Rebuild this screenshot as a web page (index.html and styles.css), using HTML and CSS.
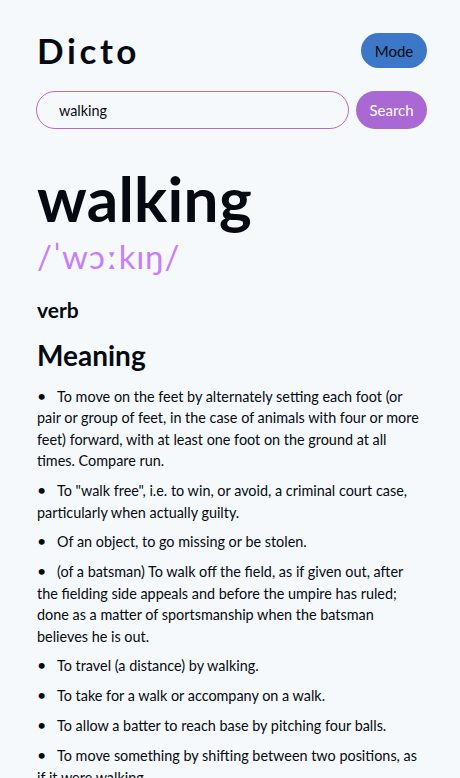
FILE: index.html
```html
<!DOCTYPE html>
<html lang="en">
<head>
<meta charset="utf-8">
<title>Dicto</title>
<link rel="stylesheet" href="styles.css">
</head>
<body>
<div class="app">
  <header class="topbar">
    <h1 class="logo">Dicto</h1>
    <button class="mode-btn">Mode</button>
  </header>
  <form class="search">
    <input class="search-input" type="text" value="walking">
    <button class="search-btn" type="button">Search</button>
  </form>
  <main class="entry">
    <h2 class="word">walking</h2>
    <p class="phonetic">/ˈwɔːkɪŋ/</p>
    <h3 class="pos">verb</h3>
    <h3 class="meaning-title">Meaning</h3>
    <ul class="defs">
      <li>To move on the feet by alternately setting each foot (or pair or group of feet, in the case of animals with four or more feet) forward, with at least one foot on the ground at all times. Compare run.</li>
      <li>To "walk free", i.e. to win, or avoid, a criminal court case, particularly when actually guilty.</li>
      <li>Of an object, to go missing or be stolen.</li>
      <li>(of a batsman) To walk off the field, as if given out, after the fielding side appeals and before the umpire has ruled; done as a matter of sportsmanship when the batsman believes he is out.</li>
      <li>To travel (a distance) by walking.</li>
      <li>To take for a walk or accompany on a walk.</li>
      <li>To allow a batter to reach base by pitching four balls.</li>
      <li>To move something by shifting between two positions, as if it were walking.</li>
    </ul>
  </main>
</div>
</body>
</html>
```
FILE: styles.css
```css
* { box-sizing: border-box; }
html, body { margin: 0; padding: 0; }
body {
  background: #f5f9fc;
  color: #050a10;
  font-family: Lato, "Noto Sans", sans-serif;
  overflow: hidden;
}
.app {
  padding: 33px 33px 0 37px;
}
.topbar {
  display: flex;
  justify-content: space-between;
  align-items: center;
}
.logo {
  margin: 0;
  font-size: 35px;
  font-weight: 700;
  letter-spacing: 3.6px;
  line-height: 35px;
}
.mode-btn {
  width: 66px;
  height: 35px;
  border: none;
  border-radius: 18px;
  background: #3d78c8;
  color: #0a0a0a;
  font-family: inherit;
  font-size: 15px;
}
.search {
  display: flex;
  gap: 7px;
  margin: 23px 0 0 -1px;
}
.search-input {
  flex: 1;
  height: 38px;
  border: 1px solid #b06ad8;
  border-radius: 19px;
  background: transparent;
  padding: 0 22px;
  font-family: inherit;
  font-size: 14.4px;
  color: #050a10;
  outline: none;
}
.search-btn {
  width: 71px;
  height: 38px;
  border: none;
  border-radius: 19px;
  background: #aa68d4;
  color: #fff;
  font-family: inherit;
  font-size: 15px;
}
.word {
  margin: 34px 0 0;
  font-size: 62px;
  font-weight: 700;
  line-height: 70px;
  letter-spacing: 0.3px;
}
.phonetic {
  margin: 3px 0 0;
  color: #c77dff;
  font-size: 33px;
  line-height: 40px;
  letter-spacing: 1px;
}
.pos {
  margin: 21px 0 0;
  font-size: 21px;
  line-height: 26px;
}
.meaning-title {
  margin: 15px 0 0;
  font-size: 28px;
  line-height: 34px;
}
.defs {
  list-style: none;
  margin: 13px 0 0;
  padding: 0;
}
.defs li {
  font-size: 14.4px;
  line-height: 21.4px;
  margin-bottom: 7.5px;
}
.defs li::before {
  content: "•";
  display: inline-block;
  width: 20px;
  font-size: 16px;
}
```
